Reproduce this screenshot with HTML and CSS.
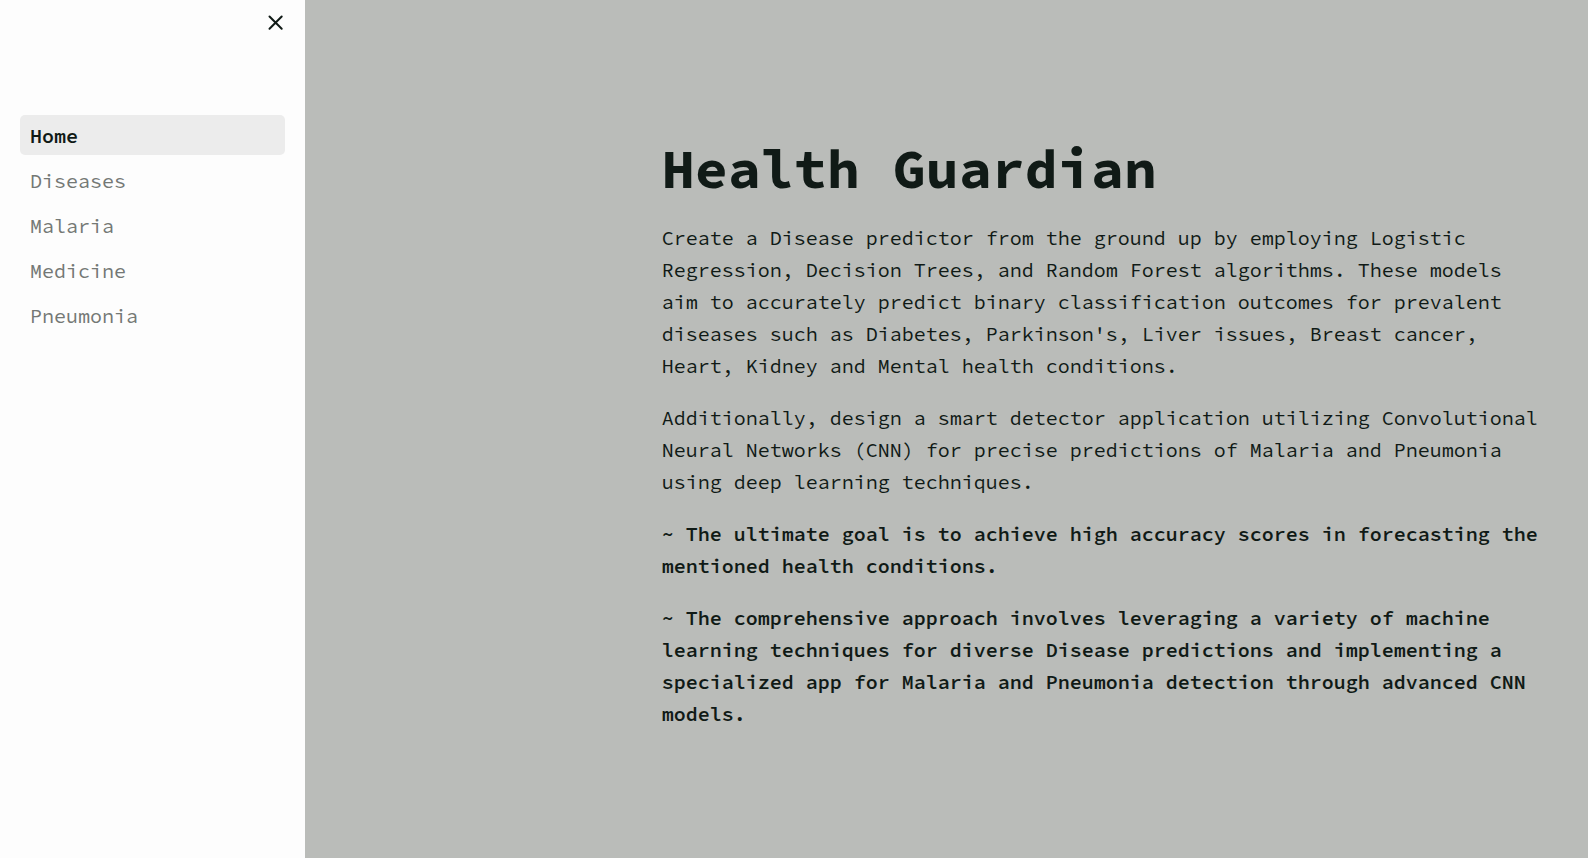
FILE: index.html
```html
<!DOCTYPE html>
<html lang="en">
<head>
<meta charset="utf-8">
<meta name="viewport" content="width=device-width, initial-scale=1">
<title>Health Guardian</title>
<link rel="stylesheet" href="styles.css">
</head>
<body>
<div class="app">
  <aside class="sidebar">
    <div class="sidebar-header">
      <button class="close" type="button" aria-label="Close sidebar">
        <svg class="close-icon" viewBox="0 0 20 20" aria-hidden="true"><path d="M4.5 4.5 16.7 16.7M16.7 4.5 4.5 16.7"/></svg>
      </button>
    </div>
    <nav class="nav" aria-label="Pages">
      <a class="nav-link nav-link-active" href="#home" aria-current="page">Home</a>
      <a class="nav-link" href="#diseases">Diseases</a>
      <a class="nav-link" href="#malaria">Malaria</a>
      <a class="nav-link" href="#medicine">Medicine</a>
      <a class="nav-link" href="#pneumonia">Pneumonia</a>
    </nav>
  </aside>
  <main class="main">
    <article class="intro">
      <h1 class="title">Health Guardian</h1>
      <p>Create a Disease predictor from the ground up by employing Logistic Regression, Decision Trees, and Random Forest algorithms. These models aim to accurately predict binary classification outcomes for prevalent diseases such as Diabetes, Parkinson's, Liver issues, Breast cancer, Heart, Kidney and Mental health conditions.</p>
      <p>Additionally, design a smart detector application utilizing Convolutional Neural Networks (CNN) for precise predictions of Malaria and Pneumonia using deep learning techniques.</p>
      <p><strong>~ The ultimate goal is to achieve high accuracy scores in forecasting the mentioned health conditions.</strong></p>
      <p><strong>~ The comprehensive approach involves leveraging a variety of machine learning techniques for diverse Disease predictions and implementing a specialized app for Malaria and Pneumonia detection through advanced CNN models.</strong></p>
    </article>
  </main>
</div>
</body>
</html>
```
FILE: styles.css
```css
* {
  box-sizing: border-box;
}

body {
  margin: 0;
  color: #101a16;
  background: #babcb9;
  font-family: "Source Code Pro", "Liberation Mono", monospace;
  font-size: 20px;
  line-height: 32px;
}

.app {
  display: flex;
  min-height: 100vh;
}

.sidebar {
  flex: 0 0 305px;
  padding: 0 20px;
  background: #fdfdfd;
}

.sidebar-header {
  display: flex;
  justify-content: flex-end;
  padding: 12px 0 83px;
}

.close {
  display: flex;
  padding: 0;
  border: 0;
  background: none;
  color: inherit;
  cursor: pointer;
}

.close-icon {
  width: 20px;
  height: 20px;
  fill: none;
  stroke: currentColor;
  stroke-width: 2;
  stroke-linecap: round;
}

.nav {
  display: flex;
  flex-direction: column;
  gap: 5px;
}

.nav-link {
  padding: 5px 10px 3px;
  border-radius: 5px;
  color: #747875;
  text-decoration: none;
}

.nav-link-active {
  background: #ececec;
  color: #101a16;
  font-weight: 600;
}

.main {
  flex: 1;
  display: grid;
  grid-template-columns: 1fr 3fr;
  gap: 16px;
  padding: 136px 48px 48px;
}

.intro {
  grid-column: 2;
}

.title {
  margin: 0 0 20px;
  font-size: 55px;
  font-weight: 700;
  line-height: 66px;
}

.intro p {
  margin: 0 0 20px;
}

.intro strong {
  font-weight: 600;
}
```
